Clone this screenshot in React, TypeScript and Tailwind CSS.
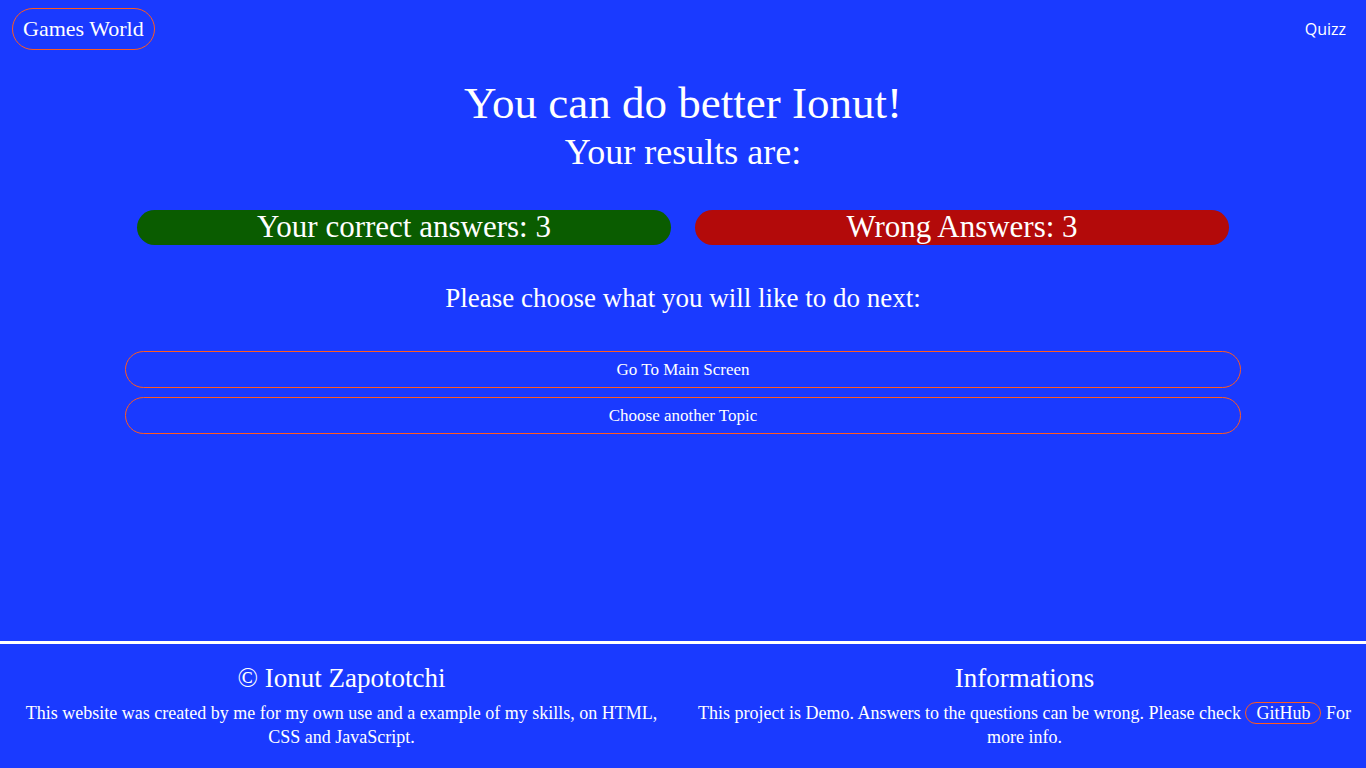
import React from 'react'

const serif = { fontFamily: '"Liberation Serif", "DejaVu Serif", serif' }

export default function App() {
  return (
    <div className="min-h-screen flex flex-col bg-[#1a3aff] text-white" style={serif}>
      {/* Header */}
      <header className="flex items-center justify-between pl-3 pr-5 pt-2">
        <a className="h-[42px] px-[10px] flex items-center rounded-full border border-[#ff5a1f] text-[22px] leading-none">
          Games World
        </a>
        <a className="text-base font-['Open_Sans',sans-serif]">Quizz</a>
      </header>

      {/* Results */}
      <main className="flex-1 flex flex-col items-center">
        <h1 className="mt-[28px] text-[45px] leading-[50px]">You can do better Ionut!</h1>
        <h2 className="mt-[4px] text-[36px] leading-[40px]">Your results are:</h2>

        <div className="mt-[38px] flex gap-6">
          <div className="w-[534px] h-[35px] rounded-full bg-[#0a5c00] flex items-center justify-center text-[31px]">
            Your correct answers: 3
          </div>
          <div className="w-[534px] h-[35px] rounded-full bg-[#b30a0a] flex items-center justify-center text-[31px]">
            Wrong Answers: 3
          </div>
        </div>

        <p className="mt-[38px] text-[27px] leading-[30px]">Please choose what you will like to do next:</p>

        <div className="mt-[38px] w-[1116px] flex flex-col gap-[9px]">
          <button className="h-[37px] rounded-full border border-[#ff5a1f] text-[17px]">Go To Main Screen</button>
          <button className="h-[37px] rounded-full border border-[#ff5a1f] text-[17px]">Choose another Topic</button>
        </div>
      </main>

      {/* Footer */}
      <footer className="border-t-[3px] border-white grid grid-cols-2 h-[127px] pt-[19px]">
        <div className="flex flex-col items-center px-[24px] text-center">
          <h3 className="text-[27px] leading-[30px]">© Ionut Zapototchi</h3>
          <p className="mt-[8px] text-[18px] leading-6">
            This website was created by me for my own use and a example of my skills, on HTML, CSS and JavaScript.
          </p>
        </div>
        <div className="flex flex-col items-center px-[10px] text-center">
          <h3 className="text-[27px] leading-[30px]">Informations</h3>
          <p className="mt-[8px] text-[18px] leading-6">
            This project is Demo. Answers to the questions can be wrong. Please check{' '}
            <a className="px-[10px] rounded-full border border-[#ff5a1f]">GitHub</a> For more info.
          </p>
        </div>
      </footer>
    </div>
  )
}
